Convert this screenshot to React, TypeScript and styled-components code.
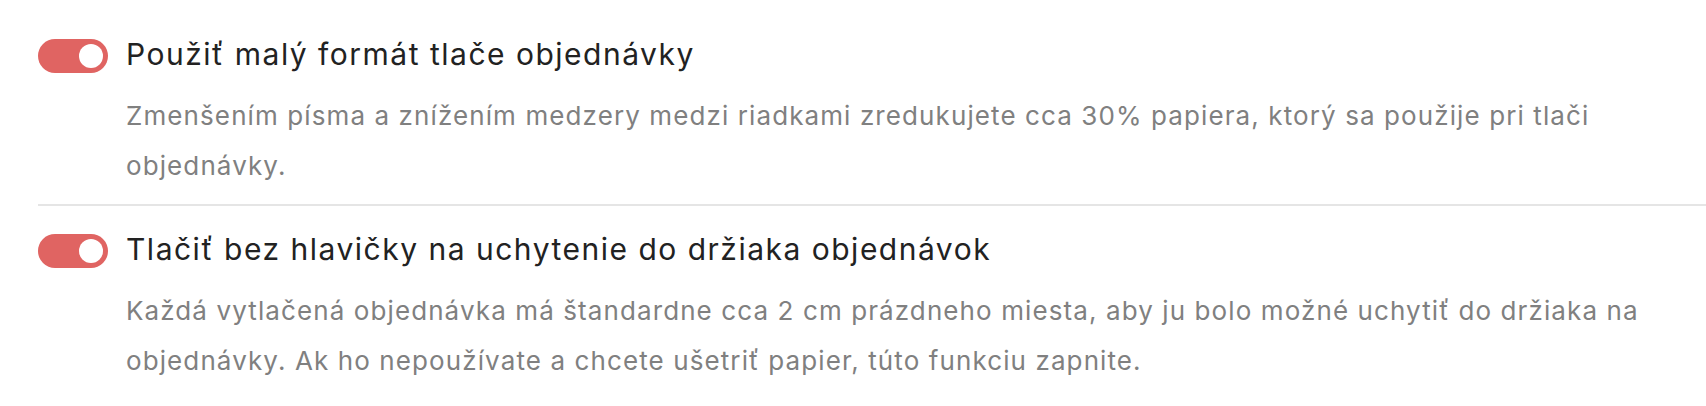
import React, { useState } from "react";
import styled, { createGlobalStyle } from "styled-components";

const GlobalStyle = createGlobalStyle`
  body {
    margin: 0;
    background: #ffffff;
    font-family: "Inter", "Liberation Sans", sans-serif;
  }
`;

const List = styled.div`
  display: flex;
  flex-direction: column;
  padding: 36px 0 0 38px;
`;

const Item = styled.div<{ $divider?: boolean }>`
  display: flex;
  flex-direction: column;
  padding-bottom: ${(p) => (p.$divider ? "13px" : "0")};
  border-bottom: ${(p) => (p.$divider ? "2px solid #e5e5e5" : "none")};
  margin-bottom: ${(p) => (p.$divider ? "25px" : "0")};
`;

const Header = styled.label`
  display: flex;
  align-items: flex-start;
  gap: 18px;
  cursor: pointer;
`;

const Switch = styled.button<{ $on: boolean }>`
  position: relative;
  flex: none;
  width: 70px;
  height: 34px;
  margin-top: 3px;
  border: none;
  border-radius: 17px;
  padding: 0;
  background: ${(p) => (p.$on ? "#e06462" : "#cccccc")};
  cursor: pointer;

  &::after {
    content: "";
    position: absolute;
    top: 5px;
    left: ${(p) => (p.$on ? "41px" : "5px")};
    width: 24px;
    height: 24px;
    border-radius: 50%;
    background: #ffffff;
  }
`;

const Title = styled.span`
  font-size: 30px;
  line-height: 36px;
  color: #222222;
  letter-spacing: 1.5px;
`;

const Description = styled.p`
  margin: 18px 0 0 88px;
  font-size: 26px;
  line-height: 50px;
  color: #808080;
  letter-spacing: 1.1px;
`;

const settings = [
  {
    id: "small",
    title: "Použiť malý formát tlače objednávky",
    text: "Zmenšením písma a znížením medzery medzi riadkami zredukujete cca 30% papiera, ktorý sa použije pri tlači objednávky.",
  },
  {
    id: "header",
    title: "Tlačiť bez hlavičky na uchytenie do držiaka objednávok",
    text: "Každá vytlačená objednávka má štandardne cca 2 cm prázdneho miesta, aby ju bolo možné uchytiť do držiaka na objednávky. Ak ho nepoužívate a chcete ušetriť papier, túto funkciu zapnite.",
  },
];

export default function App() {
  const [state, setState] = useState<Record<string, boolean>>({
    small: true,
    header: true,
  });

  return (
    <>
      <GlobalStyle />
      <List>
        {settings.map((s, i) => (
          <Item key={s.id} $divider={i < settings.length - 1}>
            <Header>
              <Switch
                $on={state[s.id]}
                onClick={() => setState((c) => ({ ...c, [s.id]: !c[s.id] }))}
              />
              <Title>{s.title}</Title>
            </Header>
            <Description>{s.text}</Description>
          </Item>
        ))}
      </List>
    </>
  );
}
